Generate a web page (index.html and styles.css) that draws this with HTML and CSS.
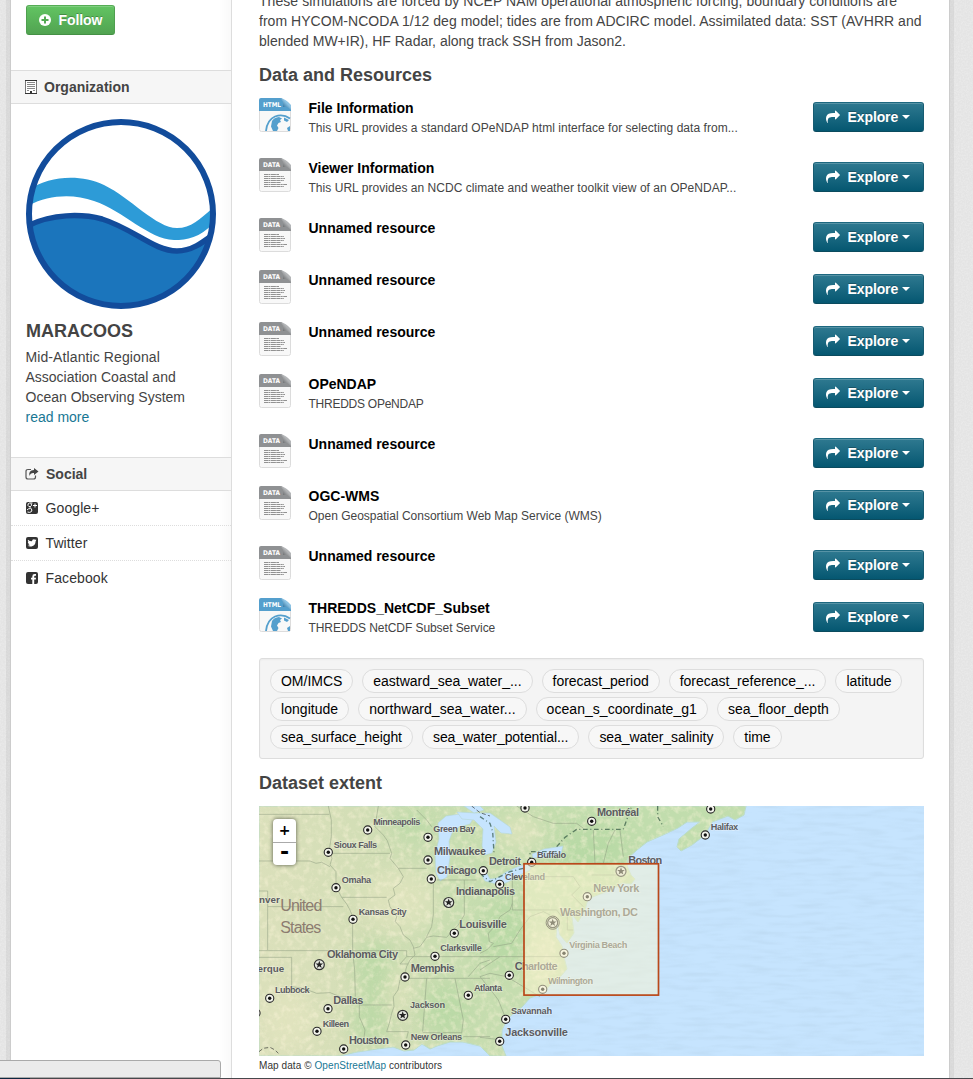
FILE: index.html
```html
<!DOCTYPE html>
<html lang="en">
<head>
<meta charset="utf-8">
<title>Dataset - MARACOOS</title>
<link rel="stylesheet" href="styles.css">
</head>
<body>
<svg class="defs" width="0" height="0" aria-hidden="true">
  <defs>
    <linearGradient id="curlGrey" x1="0" y1="1" x2="1" y2="0"><stop offset=".3" stop-color="#747678"/><stop offset=".6" stop-color="#b4b6b8"/></linearGradient>
    <linearGradient id="curlBlue" x1="0" y1="1" x2="1" y2="0"><stop offset=".3" stop-color="#3d7ea8"/><stop offset=".6" stop-color="#8dc3e4"/></linearGradient>
    <symbol id="share" viewBox="0 0 1792 1792"><path d="M1792 640q0 26-19 45l-512 512q-19 19-45 19t-45-19-19-45v-256h-224q-98 0-175.500 6t-154 21.500-133 42.500-105.500 69.500-80 101-48.500 138.500-17.500 181q0 55 5 123 0 6 2.500 23.500t2.500 26.500q0 15-8.500 25t-23.500 10q-16 0-28-17-7-9-13-22t-13.500-30-10.500-24q-127-285-127-451 0-199 53-333 162-403 875-403h224v-256q0-26 19-45t45-19 45 19l512 512q19 19 19 45z"/></symbol>
    <symbol id="data" viewBox="0 0 32 34">
      <path d="M.5 10V31.500Q.5 33.500 2.500 33.500H29.500Q31.500 33.500 31.500 31.500V8z" fill="#f8f8f8" stroke="#dcdcdc"/>
      <path d="M0 13V2Q0 0 2 0H22.500L32 9.500V13z" fill="#8f9193"/>
      <path d="M21 0Q25 3 24 9Q28 7.500 32 12V7Q27 1 21 0z" fill="url(#curlGrey)"/>
      <text class="file-label" x="4" y="9" textLength="17" lengthAdjust="spacingAndGlyphs">DATA</text>
      <path d="M5 16.500H20M5 18.500H25M5 20.500H26M5 22.500H25M5 24.500H22M5 26.500H28M5 28.500H25" stroke="#777" stroke-width=".8" stroke-dasharray="4 .4 2 .5 5 .4" fill="none"/>
    </symbol>
    <symbol id="html" viewBox="0 0 32 34">
      <path d="M.5 10V31.500Q.5 33.500 2.500 33.500H29.500Q31.500 33.500 31.500 31.500V8z" fill="#f8f8f8" stroke="#dcdcdc"/>
      <path d="M0 13V2Q0 0 2 0H22.500L32 9.500V13z" fill="#549fcd"/>
      <path d="M21 0Q25 3 24 9Q28 7.500 32 12V7Q27 1 21 0z" fill="url(#curlBlue)"/>
      <text class="file-label" x="4" y="9" textLength="18" lengthAdjust="spacingAndGlyphs">HTML</text>
      <path d="M7 33Q8 22 16 18.500Q24 15.500 31 20.500" fill="none" stroke="#549fcd" stroke-width="1.800"/>
      <path d="M13 23Q15 19.500 20 19L23 20.500L21 22L22 24L19.500 25L18 27.500L19.500 30L18 33H14L12 28.500zM25 19.500L30 22L28 24L25 22.500zM28 30L31 28V33H29z" fill="#549fcd"/>
    </symbol>
    <symbol id="dot" viewBox="-6 -6 12 12"><circle r="4.100" fill="#f3f4ec" stroke="#292929" stroke-width="1.100"/><circle r="1.700" fill="#111"/></symbol>
    <symbol id="star" viewBox="-7 -7 14 14"><circle r="5" fill="#e4e7df" stroke="#333" stroke-width="1.200"/><path d="M0-4L1-1.300L3.800-1.200L1.600.5L2.400 3.200L0 1.600L-2.400 3.200L-1.600.5L-3.800-1.200L-1-1.300z" fill="#222"/></symbol>
  </defs>
</svg>
<div class="page">
  <aside class="sidebar">
    <div class="follow-wrap">
      <a class="btn btn-follow"><svg width="12" height="12" viewBox="0 0 12 12"><circle cx="6" cy="6" r="6" fill="#fff"/><path d="M6 2.500V9.500M2.500 6H9.500" stroke="#54aa54" stroke-width="2"/></svg><span>Follow</span></a>
    </div>
    <h2 class="side-heading org"><svg width="12" height="14" viewBox="0 0 12 14"><path d="M.5 13.500V.5H11.500V13.500z" fill="#fff" stroke="#777"/><path d="M0 .5H12M0 13.500H5M7 13.500H12" stroke="#333"/><path d="M2 2.500H10M2 4.500H10M2 6.500H10M2 8.500H10M2 10.500H4M8 10.500H10" stroke="#888"/><path d="M5 11H7V14H5z" fill="#333"/></svg><span>Organization</span></h2>
    <div class="org-info">
      <svg class="logo" width="190" height="190" viewBox="0 0 190 190">
        <defs><clipPath id="disc"><circle cx="95" cy="95" r="92"/></clipPath></defs>
        <g clip-path="url(#disc)">
          <path d="M0 73C20 57 53 54 78 66C105 79 130 109 151 109C166 109 175 99 190 86V101C176 118 162 121 148 121C122 120 98 92 68 82C46 74 20 76 0 88z" fill="#2d9bd7"/>
          <path d="M0 108C25 94 57 95 76 100C108 110 128 132 151 132C166 132 176 124 192 112V190H0z" fill="#1b75bc" stroke="#124c9b" stroke-width="5.500"/>
        </g>
        <circle cx="95" cy="95" r="92" fill="none" stroke="#124c9b" stroke-width="6"/>
      </svg>
      <h1>MARACOOS</h1>
      <p><span class="l1">Mid-Atlantic Regional</span><br><span>Association Coastal and</span><br><span>Ocean Observing System</span><br><a>read more</a></p>
    </div>
    <h2 class="side-heading"><svg width="14" height="12" viewBox="0 0 14 12"><path d="M6 1.500H3Q1 1.500 1 3.500V9Q1 11 3 11H8.500Q10.500 11 10.500 9V7.500" fill="none" stroke="#555" stroke-width="1.200"/><path d="M9 0L13.500 3.500L9 7V5Q5.500 4.500 4.500 8Q3 2.300 9 2z" fill="#444"/></svg><span>Social</span></h2>
    <ul class="social">
      <li><svg width="12" height="12" viewBox="0 0 12 12"><rect width="12" height="12" rx="2" fill="#333"/><path d="M6.500 1H3.500Q1.500 1.500 2 3.500Q2.500 5 4.500 4.500Q3.500 5.500 5 6.500Q6.500 8 5.500 9.500Q4 11 1.500 10M5 1.500Q6.500 3.500 4.500 4.500M4.500 6.500Q2 6.500 1 8" fill="none" stroke="#fff" stroke-width="1"/><path d="M9 1.500V5.500M7 3.500H11" stroke="#fff"/></svg><span>Google+</span></li>
      <li><svg width="12" height="12" viewBox="0 0 12 12"><rect width="12" height="12" rx="2" fill="#333"/><path d="M2 2.700Q3.800 4.400 6 4.300Q6 2.300 7.900 2.200Q8.700 2.200 9.200 2.700L10.300 2.400L9.800 3.500L10.400 3.400L9.600 4.300Q9.500 8.500 5.500 9.500Q3.200 9.900 1.600 8.800Q3 8.900 4 8.100Q2.700 7.900 2.300 6.800H3.100Q1.900 6.300 1.800 4.900L2.500 5.100Q1.400 3.900 2 2.700z" fill="#fff"/></svg><span>Twitter</span></li>
      <li><svg width="12" height="12" viewBox="0 0 12 12"><rect width="12" height="12" rx="2" fill="#333"/><path d="M6.300 12V7.500H5V5.700H6.300V4.400Q6.300 2 8.700 2H10V3.800H9Q8.200 3.800 8.200 4.600V5.700H10L9.800 7.500H8.200V12z" fill="#fff"/></svg><span>Facebook</span></li>
    </ul>
  </aside>
  <main class="content">
    <p class="notes"><span class="n1">These simulations are forced by NCEP NAM operational atmospheric forcing; boundary conditions are</span><br><span class="n2">from HYCOM-NCODA 1/12 deg model; tides are from ADCIRC model. Assimilated data: SST (AVHRR and</span><br><span class="n3">blended MW+IR), HF Radar, along track SSH from Jason2.</span></p>
    <h3>Data and Resources</h3>
    <ul class="resources">
      <li><svg class="file"><use href="#html"/></svg><div class="info"><b>File Information</b><p class="long">This URL provides a standard OPeNDAP html interface for selecting data from...</p></div><a class="btn"><svg><use href="#share"/></svg><span>Explore</span><i></i></a></li>
      <li><svg class="file"><use href="#data"/></svg><div class="info"><b>Viewer Information</b><p class="long">This URL provides an NCDC climate and weather toolkit view of an OPeNDAP...</p></div><a class="btn"><svg><use href="#share"/></svg><span>Explore</span><i></i></a></li>
      <li><svg class="file"><use href="#data"/></svg><div class="info"><b>Unnamed resource</b></div><a class="btn"><svg><use href="#share"/></svg><span>Explore</span><i></i></a></li>
      <li><svg class="file"><use href="#data"/></svg><div class="info"><b>Unnamed resource</b></div><a class="btn"><svg><use href="#share"/></svg><span>Explore</span><i></i></a></li>
      <li><svg class="file"><use href="#data"/></svg><div class="info"><b>Unnamed resource</b></div><a class="btn"><svg><use href="#share"/></svg><span>Explore</span><i></i></a></li>
      <li><svg class="file"><use href="#data"/></svg><div class="info"><b>OPeNDAP</b><p class="caps">THREDDS OPeNDAP</p></div><a class="btn"><svg><use href="#share"/></svg><span>Explore</span><i></i></a></li>
      <li><svg class="file"><use href="#data"/></svg><div class="info"><b>Unnamed resource</b></div><a class="btn"><svg><use href="#share"/></svg><span>Explore</span><i></i></a></li>
      <li><svg class="file"><use href="#data"/></svg><div class="info"><b>OGC-WMS</b><p>Open Geospatial Consortium Web Map Service (WMS)</p></div><a class="btn"><svg><use href="#share"/></svg><span>Explore</span><i></i></a></li>
      <li><svg class="file"><use href="#data"/></svg><div class="info"><b>Unnamed resource</b></div><a class="btn"><svg><use href="#share"/></svg><span>Explore</span><i></i></a></li>
      <li><svg class="file"><use href="#html"/></svg><div class="info"><b>THREDDS_NetCDF_Subset</b><p class="mixed">THREDDS NetCDF Subset Service</p></div><a class="btn"><svg><use href="#share"/></svg><span>Explore</span><i></i></a></li>
    </ul>
    <div class="tags">
      <div class="tag-row first"><a>OM/IMCS</a><a>eastward_sea_water_...</a><a>forecast_period</a><a>forecast_reference_...</a><a>latitude</a></div>
      <div class="tag-row second"><a>longitude</a><a>northward_sea_water...</a><a>ocean_s_coordinate_g1</a><a>sea_floor_depth</a></div>
      <div class="tag-row third"><a>sea_surface_height</a><a>sea_water_potential...</a><a>sea_water_salinity</a><a>time</a></div>
    </div>
    <h3 class="extent">Dataset extent</h3>
    <div class="map">
      <svg width="665" height="250" viewBox="259 806 665 250">
        <defs>
          <linearGradient id="land" gradientUnits="userSpaceOnUse" x1="259" y1="900" x2="620" y2="860"><stop offset="0" stop-color="#dbe0bb"/><stop offset=".28" stop-color="#d3deb6"/><stop offset=".55" stop-color="#c7ddb0"/><stop offset="1" stop-color="#c1ddad"/></linearGradient>
          <filter id="soft" x="-50%" y="-50%" width="200%" height="200%"><feGaussianBlur stdDeviation="9"/></filter>
          <filter id="ripple" x="0" y="0" width="100%" height="100%"><feTurbulence type="fractalNoise" baseFrequency=".035 .22" numOctaves="2" seed="4"/><feColorMatrix values="0 0 0 0 .45  0 0 0 0 .62  0 0 0 0 .78  0 1.500 0 0 -.62"/></filter>
          <filter id="grain" x="0" y="0" width="100%" height="100%"><feTurbulence type="fractalNoise" baseFrequency=".16" numOctaves="3" seed="8"/><feColorMatrix values="0 0 0 0 .95  0 0 0 0 .9  0 0 0 0 .68  0 2.600 0 0 -1.150"/></filter>
          <path id="coast" d="M259 806H746L744 815L735 820L728 816L712 822L705 835L692 845L681 851L677 847L679 839L692 828L700 822L687 822L678 828L663 835L647 842L637 850L628 858L627 866L631 875L635 879L631 884L622 883L613 889L595 896L588 899L585 910L578 922L574 917L571 910L574 933L567 943L560 935L557 921L556 937L562 946L564 957L567 969L560 977L552 983L543 993L530 998L522 1007L508 1018L502 1030L502 1046L506 1056H490L480 1046L463 1042L450 1042L437 1046L430 1049L422 1044L414 1050L404 1051L393 1047L377 1049L357 1052L340 1056H259z"/>
          <clipPath id="landClip"><use href="#coast"/></clipPath>
        </defs>
        <rect x="259" y="806" width="665" height="250" fill="#c6e4fe"/>
        <rect x="259" y="806" width="665" height="250" filter="url(#ripple)" opacity=".5"/>
        <use href="#coast" fill="url(#land)" stroke="#b9dcc9" stroke-width="1"/>
        <g clip-path="url(#landClip)">
          <g filter="url(#soft)" fill="#b4d8a2" opacity=".7">
            <ellipse cx="375" cy="968" rx="22" ry="28"/><ellipse cx="370" cy="1020" rx="20" ry="26"/><ellipse cx="445" cy="1010" rx="25" ry="26"/><ellipse cx="505" cy="935" rx="24" ry="35"/><ellipse cx="590" cy="850" rx="35" ry="22"/><ellipse cx="412" cy="825" rx="20" ry="13"/>
          </g>
          <g filter="url(#soft)" fill="#e3e5c0" opacity=".65"><ellipse cx="400" cy="900" rx="38" ry="32"/><ellipse cx="398" cy="990" rx="8" ry="34"/><ellipse cx="520" cy="832" rx="22" ry="18"/><ellipse cx="290" cy="1020" rx="25" ry="30"/><ellipse cx="545" cy="955" rx="15" ry="28"/></g>
          <rect x="259" y="806" width="500" height="250" filter="url(#grain)" opacity=".5"/>
        </g>
        <g fill="#c6e4fe" stroke="#b5d7d5" stroke-width=".6">
          <path d="M438 823L446 816L460 814L474 817L470 824L459 827L452 833L449 841L450 857L447 877L440 881L436 873L435 854L439 839z"/>
          <path d="M457 812L476 813L490 813L500 820L510 827L512 834L501 833L494 826L496 842L492 853L485 855L482 846L483 829L474 820L462 819z"/>
          <path d="M497 878L506 872L517 867L532 862L530 870L520 875L508 882L500 885L485 881L482 876L486 872L490 879z"/>
          <path d="M532 854L544 849L563 846L561 854L548 857L533 858z"/>
          <path d="M464 806H480L484 810L474 813z"/>
        </g>
        <g fill="none" stroke="#8d9c80" stroke-width="2.400" opacity=".65" stroke-linejoin="round">
          <g transform="translate(250 800) scale(.3333)">
            <path d="M27 43H238M235 18L244 60L244 110L238 150L246 175L240 195L258 215L258 260L275 292L290 312L300 330L308 350V455L314 510L316 590M27 183H180L198 190L215 187L240 200M240 160H420M385 18L375 80L400 105L412 122L425 160L420 175L445 205L460 230L450 250L430 265L435 285L415 300L420 320L440 350L436 365L450 380L460 405L480 420L490 440L495 465L480 480L470 500L462 530L450 540L444 570L430 590L432 620L425 640L418 670L410 695H475L470 715M275 292H410M445 205H530M550 240V345L545 380L530 410M560 240H680M643 240V345L625 375L610 390L590 412L550 408L530 412L510 440L490 445M27 273H53V450M53 320H280M27 452H308M27 472H125V560L160 565L200 580L240 578L270 590L300 590L328 600V615H425M328 615V650L345 690L340 730M308 452H470V470L450 492H475M470 470H720M455 535H720M530 535L518 695M615 535L640 660L635 700M518 698H635M640 710H720M655 530L690 490L720 480M500 30L530 60L545 80"/>
            <path d="M27 755L40 745L60 742L75 750L85 760M665 18L690 38L720 48" stroke="#333" stroke-width="3" stroke-dasharray="12 7"/>
          </g>
          <g transform="translate(480 800) scale(.3333)">
            <path d="M0 470H250M97 230H280L300 260L275 285L310 320M97 230V330H230L245 350M340 90L345 190M405 90L385 130L370 190M420 90L430 170M335 225H420M338 190H430M97 310L90 330L60 350L48 375L25 400L28 425L40 430L20 450L0 460M40 440L95 430L120 390L150 350L190 335L210 345M262 345V390H280M0 530L40 580L55 600L75 650M0 530L30 520L80 530L180 590M0 712L50 718M0 510L60 470M110 18L160 50L220 70L290 70L310 85"/>
            <path d="M230 140L255 112L290 88H430L455 18M150 185V155H230M130 205L90 215L30 245L5 225M0 50L30 70L38 95L42 160M533 18V50L550 80" stroke="#244a38" stroke-width="4" stroke-dasharray="14 8 3 8"/>
          </g>
        </g>
        <g>
          <use href="#dot" x="361.700" y="824" width="12" height="12"/><use href="#dot" x="422" y="831.300" width="12" height="12"/><use href="#dot" x="322.300" y="846.300" width="12" height="12"/><use href="#dot" x="422" y="854" width="12" height="12"/><use href="#dot" x="425.300" y="873" width="12" height="12"/><use href="#dot" x="477.300" y="864.700" width="12" height="12"/><use href="#dot" x="330" y="881.700" width="12" height="12"/><use href="#dot" x="347" y="913.300" width="12" height="12"/><use href="#dot" x="448.300" y="927.300" width="12" height="12"/><use href="#dot" x="429" y="950.300" width="12" height="12"/><use href="#dot" x="399" y="971" width="12" height="12"/><use href="#dot" x="263.700" y="992.300" width="12" height="12"/><use href="#dot" x="322" y="1002.700" width="12" height="12"/><use href="#dot" x="462.300" y="989.300" width="12" height="12"/><use href="#dot" x="311" y="1025.300" width="12" height="12"/><use href="#dot" x="337.700" y="1043" width="12" height="12"/><use href="#dot" x="399.700" y="1039" width="12" height="12"/><use href="#dot" x="585.700" y="815.300" width="12" height="12"/><use href="#dot" x="519" y="802" width="12" height="12"/><use href="#dot" x="525.700" y="856.300" width="12" height="12"/><use href="#dot" x="493.700" y="878.300" width="12" height="12"/><use href="#dot" x="581.300" y="890.700" width="12" height="12"/><use href="#dot" x="558" y="947.300" width="12" height="12"/><use href="#dot" x="503.300" y="969.300" width="12" height="12"/><use href="#dot" x="536.700" y="983.300" width="12" height="12"/><use href="#dot" x="499.700" y="1013.300" width="12" height="12"/><use href="#dot" x="493.700" y="1035.300" width="12" height="12"/><use href="#dot" x="699.300" y="829" width="12" height="12"/><use href="#dot" x="704.700" y="803" width="12" height="12"/><use href="#dot" x="250" y="1007" width="12" height="12"/>
          <use href="#star" x="441.700" y="895.500" width="14" height="14"/><use href="#star" x="312.300" y="957.700" width="14" height="14"/><use href="#star" x="395.700" y="1008.300" width="14" height="14"/><use href="#star" x="614" y="864.300" width="14" height="14"/><use href="#star" x="545.700" y="915.700" width="14" height="14"/><circle cx="552.700" cy="922.700" r="6.600" fill="none" stroke="#333"/>
        </g>
        <g class="city small">
          <text x="373.300" y="825.300" textLength="47">Minneapolis</text><text x="433.300" y="832" textLength="42">Green Bay</text><text x="333.700" y="847.500" textLength="43.500">Sioux Falls</text><text x="341.700" y="882.700" textLength="29.500">Omaha</text><text x="358.700" y="914.700" textLength="48">Kansas City</text><text x="440.300" y="951.300" textLength="41.500">Clarksville</text><text x="275" y="993" textLength="34.500">Lubbock</text><text x="474" y="990.700" textLength="28">Atlanta</text><text x="410" y="1008.300" textLength="35">Jackson</text><text x="322.700" y="1026.700" textLength="26.500">Killeen</text><text x="410.700" y="1040" textLength="51.500">New Orleans</text><text x="537" y="857.700" textLength="29">Buffalo</text><text x="505" y="879.500" textLength="40">Cleveland</text><text x="569.300" y="948.300" textLength="58">Virginia Beach</text><text x="548" y="984.300" textLength="45">Wilmington</text><text x="511" y="1014" textLength="41">Savannah</text><text x="710.700" y="830" textLength="27.500">Halifax</text>
        </g>
        <g class="city">
          <text x="434" y="854.700" textLength="52">Milwaukee</text><text x="437" y="873.700" textLength="40">Chicago</text><text x="489" y="864.700" textLength="32">Detroit</text><text x="456" y="895" textLength="59">Indianapolis</text><text x="459.300" y="928" textLength="47.500">Louisville</text><text x="327" y="957.700" textLength="71">Oklahoma City</text><text x="410.700" y="971.700" textLength="44">Memphis</text><text x="333.300" y="1003.500" textLength="30">Dallas</text><text x="349" y="1043.700" textLength="40">Houston</text><text x="597" y="815.700" textLength="42">Montréal</text><text x="628.300" y="864.300" textLength="34">Boston</text><text x="593.300" y="891.500" textLength="46">New York</text><text x="560" y="915.500" textLength="78">Washington, DC</text><text x="514.700" y="970.300" textLength="43">Charlotte</text><text x="505.300" y="1036.300" textLength="62.500">Jacksonville</text>
        </g>
        <g class="city cut"><text x="259" y="903">nver</text><text x="257.500" y="971.700">erque</text></g>
        <g class="country"><text x="280.300" y="910.700" textLength="42">United</text><text x="280.300" y="932.700" textLength="41">States</text></g>
        <rect x="524" y="863.800" width="134.500" height="131.300" fill="#fcf6cf" fill-opacity=".5" stroke="#b9481a" stroke-width="1.700"/>
      </svg>
      <div class="zoom"><a>+</a><a>-</a></div>
    </div>
    <p class="attribution">Map data © <a>OpenStreetMap</a> contributors</p>
  </main>
</div>
<div class="status"></div>
<div class="edge"></div>
</body>
</html>
```
FILE: styles.css
```css
* { box-sizing: border-box; }
html { height: 100%; overflow: hidden; }
body {
  margin: 0;
  height: 1079px;
  overflow: hidden;
  background-color: #e4e4e4;
  background-image: url("data:image/svg+xml,%3Csvg xmlns='http://www.w3.org/2000/svg' width='100' height='100'%3E%3Cfilter id='n'%3E%3CfeTurbulence type='fractalNoise' baseFrequency='.6' numOctaves='2' stitchTiles='stitch'/%3E%3CfeColorMatrix values='0 0 0 0 1 0 0 0 0 1 0 0 0 0 1 0 1.500 0 0 -.55'/%3E%3C/filter%3E%3Crect width='100' height='100' filter='url(%23n)' opacity='.35'/%3E%3C/svg%3E");
  color: #444;
  font: 14px/20px "Liberation Sans", Arial, sans-serif;
}
h1, h2, h3, p, ul { margin: 0; padding: 0; }
ul { list-style: none; }
svg { display: block; }
.defs { position: absolute; }
.page {
  display: flex;
  width: 940px;
  height: 1079px;
  margin-left: 10px;
  background: #fff;
  border: solid #ccc;
  border-width: 0 1px;
  box-shadow: 0 0 0 4px rgba(0, 0, 0, .05);
}
.sidebar {
  width: 221px;
  flex: none;
  border-right: 1px solid #ddd;
  background: linear-gradient(to right, #fff 208px, #f9f9f9 220px);
}
.btn {
  display: flex;
  align-items: center;
  width: 111px;
  height: 30px;
  padding-left: 12px;
  border-radius: 3px;
  color: #fff;
  font-weight: bold;
  text-shadow: 0 -1px 0 rgba(0, 0, 0, .25);
  background: linear-gradient(#2f7990, #055771);
  border: 1px solid;
  border-color: #1d6880 #175c72 #0b4b5e;
  box-shadow: inset 0 1px 0 rgba(255, 255, 255, .2);
}
.btn svg { width: 14px; height: 14px; fill: #fff; margin-right: 7.5px; }
.btn span { letter-spacing: -.1px; }
.btn i { margin-left: 4px; border: 4px solid transparent; border-top-color: #fff; border-bottom: 0; }
.follow-wrap { height: 70px; padding: 5px 15px; }
.btn-follow { width: 89px; background: linear-gradient(#62c462, #51a351); border-color: #55ad55 #4f9f4f #459045; }
.btn-follow svg { width: 12px; height: 12px; margin-right: 7.5px; }
.side-heading {
  display: flex;
  align-items: center;
  height: 34px;
  padding-left: 14px;
  border: solid #ddd;
  border-width: 1px 0;
  background: #f6f6f6;
  font-size: 14px;
}
.side-heading svg { margin-right: 7px; }
.org-info { height: 353px; padding: 15px 15px 0; }
.org-info h1 { margin-top: 12px; font-size: 18px; line-height: 20px; }
.org-info p { margin-top: 6px; margin-left: -.5px; white-space: nowrap; }
.org-info .l1 { letter-spacing: .1px; }
.org-info a, .attribution a { color: #187794; text-decoration: none; }
.social li {
  display: flex;
  align-items: center;
  height: 35px;
  padding-left: 15px;
  border-bottom: 1px dotted #ddd;
  color: #333;
  letter-spacing: .1px;
}
.social li:last-child { border-color: transparent; }
.social svg { margin-right: 7.500px; }
.content { width: 717px; padding: 0 25px 0 27px; }
.notes { margin-top: -9px; white-space: nowrap; }
.n1 { letter-spacing: .06px; }
.n2 { letter-spacing: .035px; }
h3 { margin-top: 12px; font-size: 18px; line-height: 24px; }
.resources { margin-top: 11px; }
.resources li { display: flex; padding-bottom: 20px; min-height: 52px; }
.file { width: 32px; height: 34px; flex: none; margin-bottom: -2px; overflow: visible; }
.file-label { font: bold 6.500px "DejaVu Sans", sans-serif; fill: #fff; }
.info { flex: 1; margin-left: 17.500px; white-space: nowrap; }
.info b { display: block; color: #000; }
.info p { font-size: 12px; }
.info .long { letter-spacing: .04px; }
.info .caps { letter-spacing: -.25px; }
.info .mixed { letter-spacing: -.07px; }
.resources .btn { margin: 4px 0 -2px; }
.tags {
  height: 101px;
  padding: 10px;
  border: 1px solid #ddd;
  border-radius: 3px;
  background: #f4f4f4;
  box-shadow: inset 0 1px 2px rgba(0, 0, 0, .04);
}
.tag-row { display: flex; gap: 9px; margin-bottom: 4px; }
.tag-row a {
  height: 24px;
  padding: 1px 10px;
  border: 1px solid #ddd;
  border-radius: 12px;
  background: #f7f7f7;
  color: #000;
  white-space: nowrap;
}
.first { letter-spacing: -.02px; }
.second { letter-spacing: .04px; }
.third { letter-spacing: -.07px; }
.extent { line-height: 24px; }
.map { position: relative; width: 665px; height: 250px; margin-top: 11px; }
.city { font: bold 11px "Liberation Sans", sans-serif; fill: #5c5c60; stroke: rgba(255, 255, 255, .3); stroke-width: 1.500px; paint-order: stroke; }
.city.small { font-size: 9.200px; }
.city.cut { font-size: 9.800px; }
.country { font: 16px "Liberation Sans", sans-serif; fill: #8c7c70; }
.zoom {
  position: absolute;
  left: 14px;
  top: 13px;
  width: 23px;
  height: 46px;
  border-radius: 4px;
  background: #fff;
  box-shadow: 0 0 4px rgba(0, 0, 0, .6);
  color: #000;
  font: bold 18px/22px "DejaVu Sans", sans-serif;
  text-align: center;
}
.zoom a { display: block; height: 23px; font-size: 14px; }
.zoom a + a { border-top: 1px solid #aaa; font-size: 22px; line-height: 18px; }
.attribution { font-size: 10px; line-height: 20px; color: #333; letter-spacing: .08px; }
.status {
  position: absolute;
  left: -1px;
  top: 1060px;
  width: 222px;
  height: 18px;
  border: 1px solid #aaa;
  border-radius: 0 3px 0 0;
  background: #ebebeb;
}
.edge { position: absolute; left: 0; top: 1078px; width: 100%; height: 1px; background: linear-gradient(to right, #0d2740 30px, #48484c 30px); }
```
